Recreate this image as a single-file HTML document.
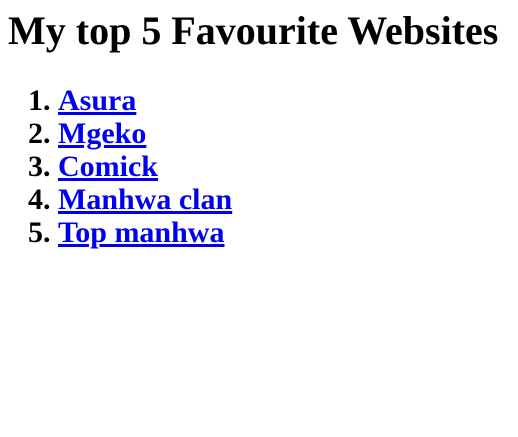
<!DOCTYPE html>
<html><head><style>
body{margin:8px;font-family:"Liberation Serif",serif;background:#fff;}
h1{font-size:40px;margin:0;line-height:46px;font-weight:bold;}
ol{font-size:30px;font-weight:bold;margin:30px 0 0 0;padding-left:50px;line-height:33px;}
a{color:#0000ee;}
</style></head><body>
<h1>My top 5 Favourite Websites</h1>
<ol>
<li><a href="#">Asura</a></li>
<li><a href="#">Mgeko</a></li>
<li><a href="#">Comick</a></li>
<li><a href="#">Manhwa clan</a></li>
<li><a href="#">Top manhwa</a></li>
</ol>
</body></html>
